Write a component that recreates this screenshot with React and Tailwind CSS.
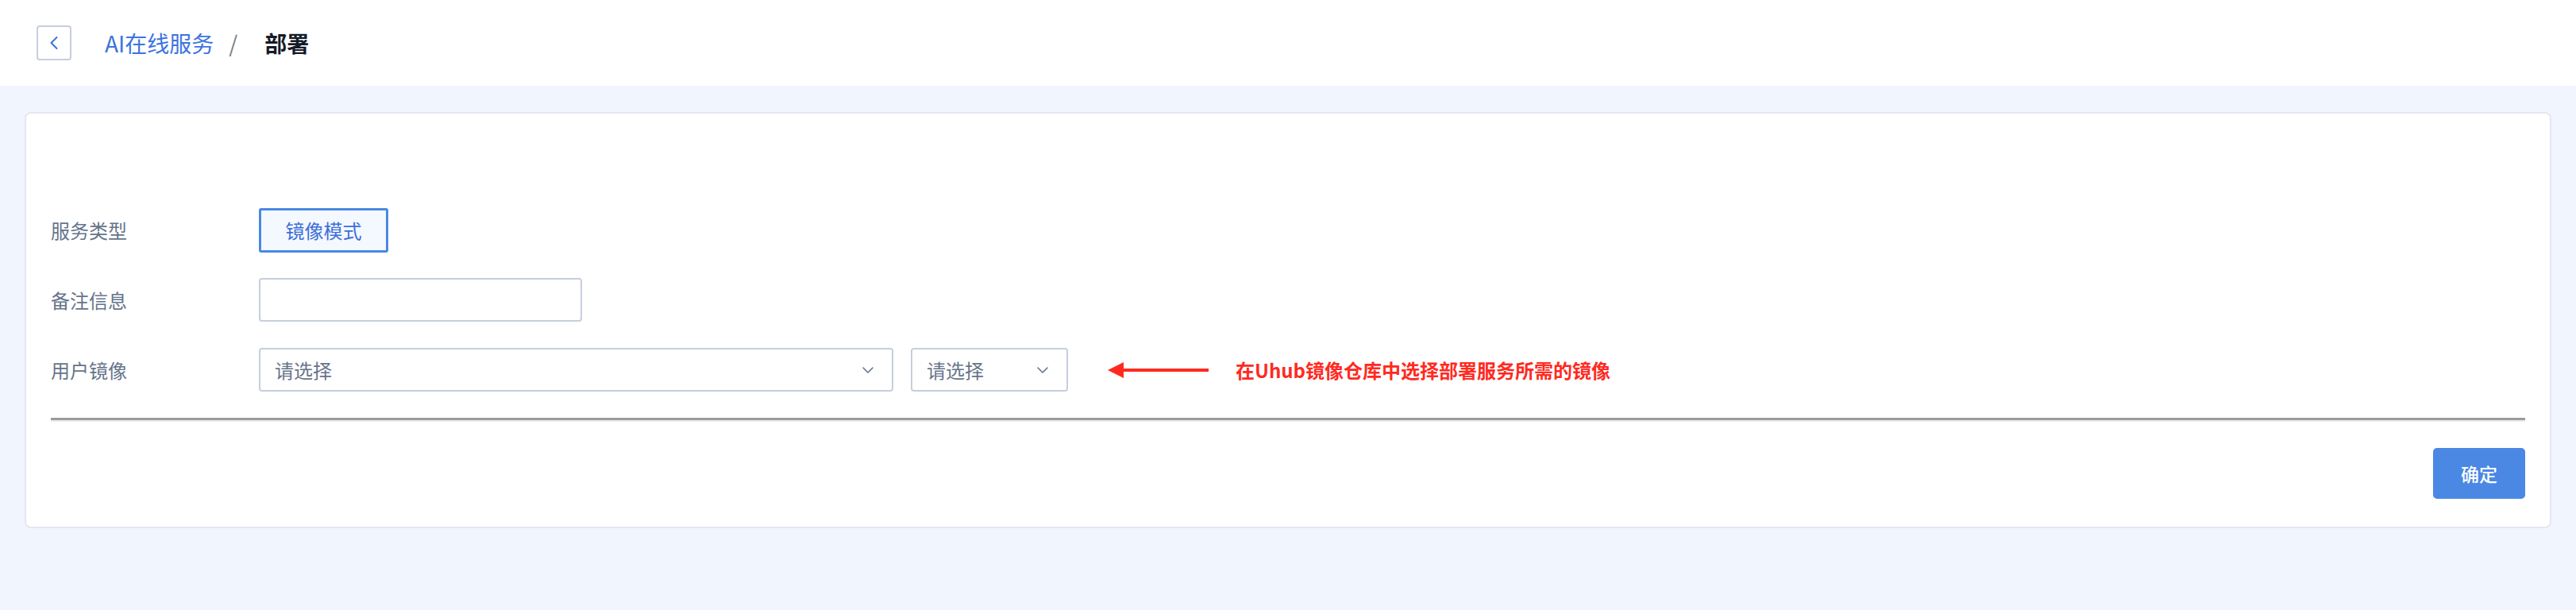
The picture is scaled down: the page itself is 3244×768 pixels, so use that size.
import { ChevronLeft, ChevronDown } from "lucide-react";

const font = { fontFamily: '"Noto Sans CJK SC", "Noto Sans", sans-serif' };

const FormRow = ({ label, children }) => (
  <div className="flex items-center h-[55px]">
    <div className="w-[262px] shrink-0 text-[24px] text-[#66748a]">{label}</div>
    <div className="flex items-center">{children}</div>
  </div>
);

const Select = ({ width }) => (
  <div
    className={`${width} h-[55px] flex items-center justify-between border-2 border-[#c6cede] rounded-[4px] pl-[18px] pr-[18px] text-[24px] text-[#66748a] bg-white`}
  >
    <span>请选择</span>
    <ChevronDown size={24} strokeWidth={1.6} className="text-[#66748a]" />
  </div>
);

export default function App() {
  return (
    <div className="min-h-[768px] bg-[#f1f5fd]" style={font}>
      {/* Header / breadcrumb */}
      <div className="h-[108px] bg-white flex items-center pl-[46px]">
        <button className="w-[44px] h-[44px] flex items-center justify-center border-2 border-[#c6cede] rounded-[4px] text-[#3d73e0]">
          <ChevronLeft size={28} strokeWidth={1.8} />
        </button>
        <span className="ml-[42px] text-[28px] text-[#3d73e0]">AI在线服务</span>
        <span className="ml-[19px] text-[28px] text-[#7a7f88]">/</span>
        <span className="ml-[34px] text-[28px] font-bold text-[#151b29]">部署</span>
      </div>

      {/* Card */}
      <div className="px-[31px] pt-[33px]">
        <div className="bg-white border-2 border-[#e2e7f1] rounded-[8px] px-[31px] pt-[119px] pb-[35px]">
          <div className="flex flex-col gap-[33px]">
            <FormRow label="服务类型">
              <button className="w-[163px] h-[56px] border-[3px] border-[#4a88e4] bg-[#f4f8ff] rounded-[3px] text-[24px] text-[#3d6fd8]">
                镜像模式
              </button>
            </FormRow>
            <FormRow label="备注信息">
              <input className="w-[407px] h-[55px] border-2 border-[#c6cede] rounded-[4px] outline-none px-[18px]" />
            </FormRow>
            <FormRow label="用户镜像">
              <Select width="w-[799px]" />
              <div className="ml-[22px]">
                <Select width="w-[198px]" />
              </div>
              <svg width="128" height="22" viewBox="0 0 128 22" className="ml-[50px]">
                <polygon points="0,11 20,1 20,21" fill="#ff2a1f" />
                <rect x="19" y="9" width="108" height="4" fill="#ff2a1f" />
              </svg>
              <span className="ml-[33px] text-[24px] font-bold text-[#ff2a1f]">
                在Uhub镜像仓库中选择部署服务所需的镜像
              </span>
            </FormRow>
          </div>

          <div className="mt-[33px] border-t-[3px] border-[#9a9a9a] border-b-2 border-b-[#ececec]" />

          <div className="flex justify-end mt-[33px]">
            <button className="w-[116px] h-[64px] bg-[#4a88e4] rounded-[5px] text-white text-[23px] font-medium">
              确定
            </button>
          </div>
        </div>
      </div>
    </div>
  );
}
